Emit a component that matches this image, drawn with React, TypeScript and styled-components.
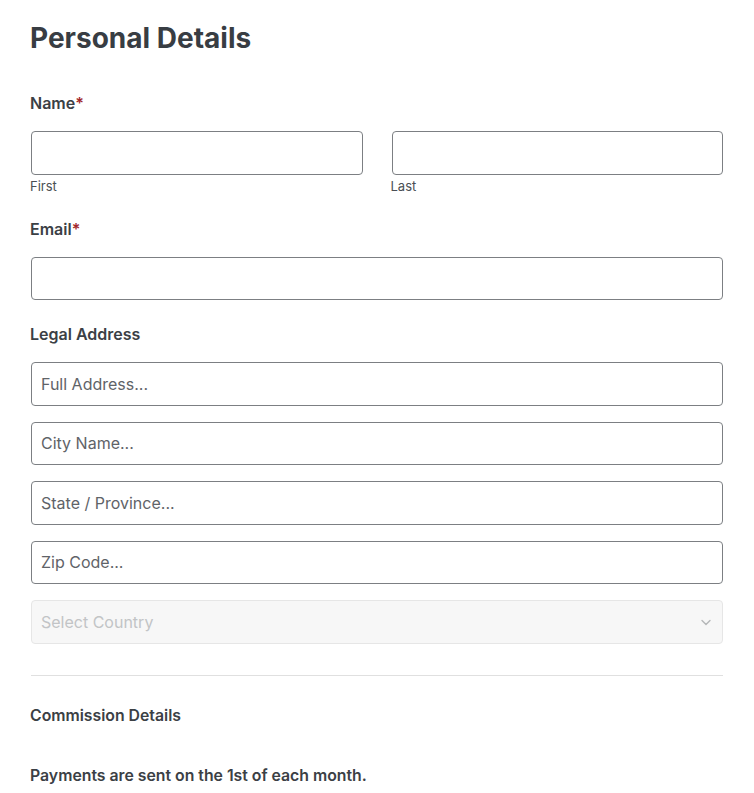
import * as React from "react"
import styled, { createGlobalStyle } from "styled-components"

const GlobalStyles = createGlobalStyle`
  html, body {
    margin: 0;
    padding: 0;
    background: #fff;
  }
  body {
    font-family: Inter, "Noto Sans", sans-serif;
    color: #3b4045;
  }
`

const Page = styled.main`
  padding: 20px 31px 0 31px;
  width: 692px;
`

const Title = styled.h1`
  font-size: 28px;
  font-weight: 700;
  color: #383d43;
  margin: 0 0 37px;
  line-height: 36px;
  margin-left: -1px;
`

const Field = styled.div`
  margin-bottom: 24px;
`

const Label = styled.div`
  font-size: 16px;
  font-weight: 600;
  color: #3b4045;
  line-height: 20px;
  margin-bottom: 18px;
  margin-left: -1px;
`

const Required = styled.span`
  color: #a3282b;
`

const Row = styled.div`
  display: grid;
  grid-template-columns: 1fr 1fr;
  column-gap: 29px;
`

const Input = styled.input`
  box-sizing: border-box;
  display: block;
  width: 100%;
  height: 43.5px;
  border: 1px solid #7c7f83;
  border-radius: 4px;
  padding: 0 9px;
  font-family: inherit;
  font-size: 16px;
  color: #3b4045;
  background: #fff;
  outline: none;
  &::placeholder {
    color: #5f6368;
  }
`

const SubLabel = styled.div`
  font-size: 13px;
  color: #4a4f54;
  margin-top: 3px;
  line-height: 17px;
  margin-left: -1px;
`

const Stack = styled.div`
  display: flex;
  flex-direction: column;
  gap: 16px;
`

const SelectBox = styled.div`
  box-sizing: border-box;
  height: 43.5px;
  border: 1px solid #e6e6e6;
  border-radius: 4px;
  background: #f7f7f7;
  padding: 0 9px;
  display: flex;
  align-items: center;
  justify-content: space-between;
  font-size: 16px;
  color: #c2c4c6;
`

const Divider = styled.hr`
  border: none;
  border-top: 1px solid #e0e0e0;
  margin: 31px 0 30px;
`

const Section = styled.div`
  font-size: 15.8px;
  font-weight: 600;
  color: #3b4045;
  line-height: 20px;
  margin-left: -1px;
`

const Note = styled(Section)`
  margin-top: 40px;
`

export default function App() {
  return (
    <Page>
      <GlobalStyles />
      <Title>Personal Details</Title>
      <Field>
        <Label>
          Name<Required>*</Required>
        </Label>
        <Row>
          <div>
            <Input type="text" />
            <SubLabel>First</SubLabel>
          </div>
          <div>
            <Input type="text" />
            <SubLabel>Last</SubLabel>
          </div>
        </Row>
      </Field>
      <Field>
        <Label>
          Email<Required>*</Required>
        </Label>
        <Input type="email" />
      </Field>
      <Label>Legal Address</Label>
      <Stack>
        <Input placeholder="Full Address..." />
        <Input placeholder="City Name..." />
        <Input placeholder="State / Province..." />
        <Input placeholder="Zip Code..." />
        <SelectBox>
          <span>Select Country</span>
          <svg width="14" height="14" viewBox="0 0 14 14" fill="none">
            <path d="M3 5.5l4 4 4-4" stroke="#b5b7b9" strokeWidth="1.4" strokeLinecap="round" strokeLinejoin="round" />
          </svg>
        </SelectBox>
      </Stack>
      <Divider />
      <Section>Commission Details</Section>
      <Note>Payments are sent on the 1st of each month.</Note>
    </Page>
  )
}
